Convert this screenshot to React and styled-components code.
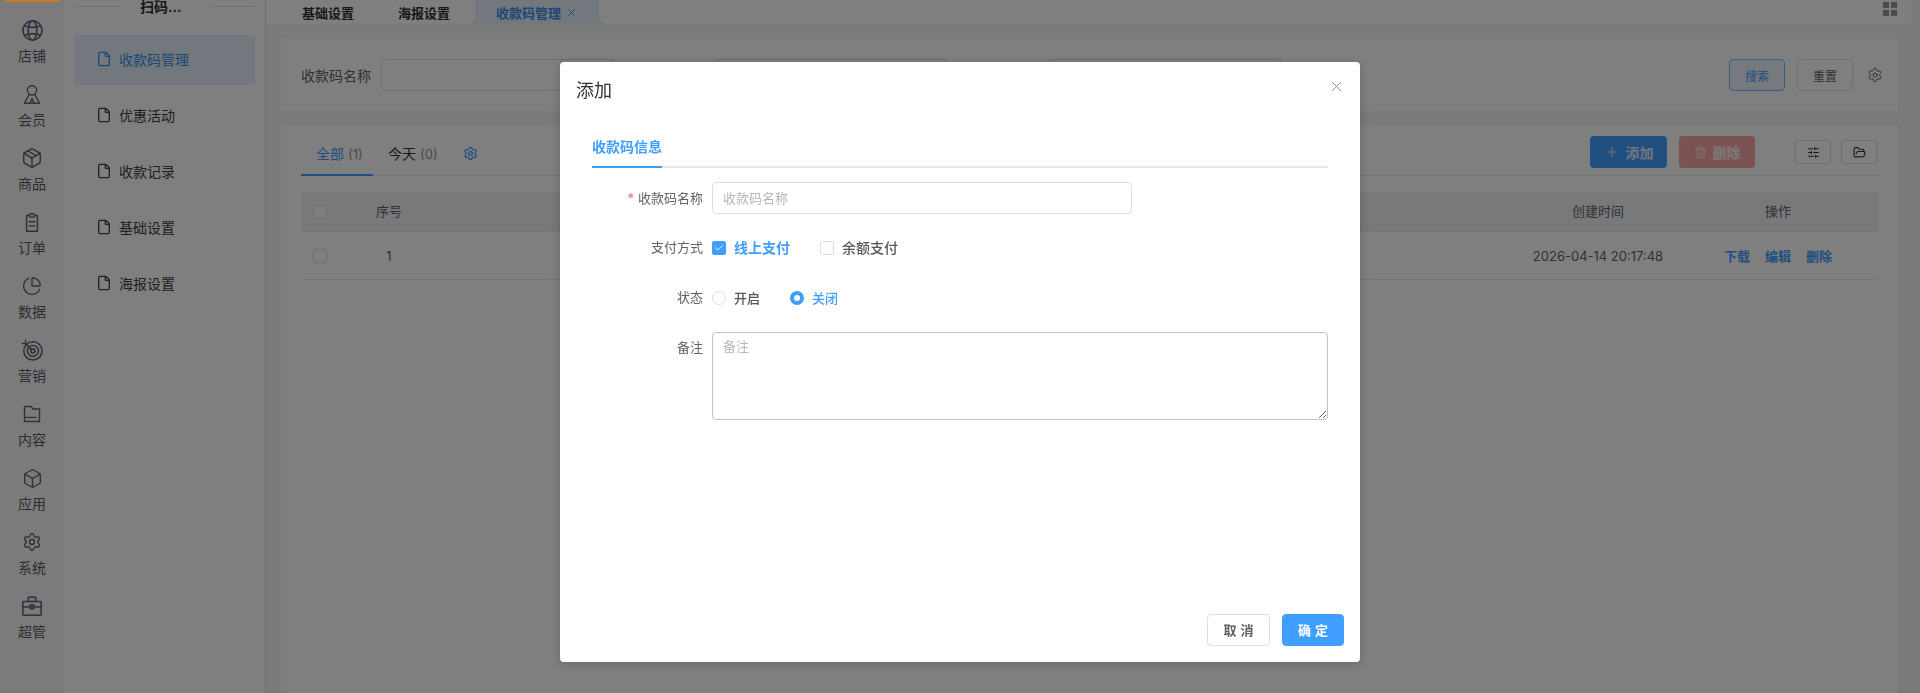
import React from 'react';
import styled, { createGlobalStyle } from 'styled-components';
import { Box, ChartPie, File, FolderOpen, Package, Plus, Settings, SlidersHorizontal, Trash2, X, Check } from 'lucide-react';

const GlobalStyle = createGlobalStyle`
  html, body {
    margin: 0;
    height: 100%;
    overflow: hidden;
    background: #f3f5f5;
    font-family: Inter, "Noto Sans CJK SC", sans-serif;
    font-size: 13px;
    color: #303133;
  }
  * { box-sizing: border-box; }
`;

const Shell = styled.div`
  display: flex;
  height: 693px;
`;
const Rail = styled.nav`
  position: relative;
  width: 64px;
  flex: none;
  background: #f6f7f8;
  display: flex;
  flex-direction: column;
  align-items: center;
  padding-top: 19px;
  gap: 18px;
  &::before {
    content: '';
    position: absolute;
    z-index: 2;
    top: 0;
    left: 5px;
    width: 55px;
    height: 2px;
    border-radius: 0 0 6px 6px;
    background: #c97a28;
  }
`;
const RailItem = styled.div`
  height: 46px;
  display: flex;
  flex-direction: column;
  align-items: center;
  justify-content: space-between;
  color: #5d6478;
  font-size: 14px;
  line-height: 18px;
  & > span { color: #555a66; }
`;
const RailGlyph = styled.div`
  height: 22px;
  display: flex;
  align-items: center;
  justify-content: center;
`;
const SubNav = styled.aside`
  width: 202px;
  flex: none;
  background: #fff;
  border-right: 1px solid #dcdfe6;
  padding: 0 10px;
`;
const SubTitle = styled.div`
  height: 35px;
  display: flex;
  align-items: flex-start;
  gap: 20px;
  font-size: 14px;
  font-weight: 600;
  line-height: 14px;
  color: #303133;
  &::before, &::after {
    content: '';
    height: 1px;
    margin-top: 6px;
    background: #dcdfe6;
  }
  &::before { width: 46px; }
  &::after { flex: 1; margin-left: 9px; }
`;
const SubItem = styled.div`
  height: 50px;
  margin-bottom: 6px;
  padding: 0 0 2px 22px;
  display: flex;
  align-items: center;
  gap: 7px;
  font-size: 14px;
  color: ${(p) => (p.$active ? '#3a8ee6' : '#404040')};
  background: ${(p) => (p.$active ? '#e6f0fc' : 'transparent')};
`;
const Main = styled.main`
  flex: 1;
  min-width: 0;
  display: flex;
  flex-direction: column;
`;
const TabBar = styled.div`
  height: 24px;
  margin-right: 9px;
  padding-left: 36px;
  flex: none;
  display: flex;
  background: #fff;
  position: relative;
  font-size: 13px;
  font-weight: 600;
`;
const PageTab = styled.div`
  height: 24px;
  display: flex;
  align-items: center;
  gap: 5px;
  margin-right: 46px;
  &:first-child { margin-right: 44px; }
`;
const ActiveTab = styled.div`
  position: relative;
  height: 24px;
  margin-left: -21px;
  padding: 0 12px 0 21px;
  width: 124px;
  display: flex;
  align-items: center;
  gap: 5px;
  color: #3a8ee6;
  background: #e6f0fc;
  &::before, &::after {
    content: '';
    position: absolute;
    bottom: 0;
    width: 8px;
    height: 8px;
  }
  &::before {
    left: -8px;
    background: radial-gradient(circle at 0 0, #fff 8px, #e6f0fc 8.5px);
  }
  &::after {
    right: -8px;
    background: radial-gradient(circle at 100% 0, #fff 8px, #e6f0fc 8.5px);
  }
`;
const GridIcon = styled.svg`
  position: absolute;
  top: 2px;
  right: 14px;
`;
const Content = styled.div`
  flex: 1;
  padding: 15px 22px 0 15px;
  display: flex;
  flex-direction: column;
  gap: 14px;
`;
const FilterCard = styled.section`
  height: 72px;
  background: #fff;
  display: flex;
  align-items: center;
  padding: 0 15px 0 21px;
  gap: 22px;
`;
const FilterField = styled.div`
  width: 312px;
  display: flex;
  align-items: center;
  justify-content: flex-end;
  color: #606266;
  font-size: 14px;
`;
const FilterLabel = styled.span`
  margin: 0 auto 0 -1px;
`;
const FilterInput = styled.div`
  width: 233px;
  height: 32px;
  border: 1px solid #dcdfe6;
  border-radius: 4px;
`;
const FilterActions = styled.div`
  margin-left: auto;
  display: flex;
  align-items: center;
  gap: 12px;
  & > svg { margin-left: 2px; color: #606266; }
`;
const PlainButton = styled.button`
  width: 56px;
  height: 32px;
  padding: 0;
  border-radius: 4px;
  font: inherit;
  font-size: 12px;
  color: ${(p) => (p.$primary ? '#409eff' : '#606266')};
  background: ${(p) => (p.$primary ? '#ecf5ff' : '#fff')};
  border: 1px solid ${(p) => (p.$primary ? '#79bbff' : '#dcdfe6')};
`;
const TableCard = styled.section`
  flex: 1;
  background: #fff;
  padding: 0 20px;
`;
const TableToolbar = styled.div`
  height: 51px;
  display: flex;
  align-items: flex-end;
  border-bottom: 1px solid #e4e7ed;
`;
const StatusTab = styled.div`
  width: ${(p) => p.$width}px;
  height: 51px;
  margin-bottom: -1px;
  padding: 11px 0 0 ${(p) => p.$inset}px;
  font-size: 14px;
  line-height: 36px;
  white-space: nowrap;
  color: ${(p) => (p.$active ? '#409eff' : '#303133')};
  border-bottom: 2px solid ${(p) => (p.$active ? '#409eff' : 'transparent')};
  & > small { font-size: 13px; color: #909399; margin-left: 4px; }
`;
const ToolbarGear = styled(Settings)`
  color: #409eff;
  margin: 0 0 14px 16px;
  align-self: flex-end;
`;
const ToolbarActions = styled.div`
  margin: 0 1px 0 auto;
  align-self: flex-start;
  padding-top: 11px;
  display: flex;
  align-items: center;
  gap: 12px;
`;
const SolidButton = styled.button`
  height: 32px;
  width: ${(p) => p.$width}px;
  padding: 0;
  border: 0;
  border-radius: 4px;
  font: inherit;
  font-size: 14px;
  font-weight: 700;
  display: flex;
  align-items: center;
  justify-content: center;
  gap: 6px;
  color: rgba(255, 255, 255, 0.85);
  background: ${(p) => p.$bg};
`;
const IconButton = styled.button`
  width: 36px;
  height: 24px;
  padding: 0;
  margin-left: ${(p) => p.$gap}px;
  border: 1px solid #dcdfe6;
  border-radius: 3px;
  background: #fff;
  color: #303133;
  display: flex;
  align-items: center;
  justify-content: center;
`;
const TableRow = styled.div`
  height: ${(p) => (p.$head ? 40 : 48)}px;
  margin-top: ${(p) => (p.$head ? 16 : 0)}px;
  display: grid;
  grid-template-columns: 50px 50px 1fr 160px 200px;
  align-items: center;
  background: ${(p) => (p.$head ? '#f0f2f6' : 'transparent')};
  border-bottom: 1px solid #e9ebef;
  color: #606266;
  text-align: center;
`;
const Tick = styled.span`
  width: 14px;
  height: 14px;
  margin-left: 12px;
  border: 1px solid #dcdfe6;
  border-radius: 2px;
  background: #fff;
`;
const HeadCell = styled.span`
  padding-bottom: 2px;
`;
const SerialCell = styled.span`
  margin-left: 25px;
  width: 26px;
  padding-bottom: ${(p) => (p.$head ? 2 : 0)}px;
`;
const Links = styled.div`
  display: flex;
  justify-content: center;
  gap: 15px;
  white-space: nowrap;
  color: #409eff;
  font-size: 13px;
  font-weight: 600;
`;

const Overlay = styled.div`
  position: fixed;
  z-index: 1;
  inset: 0;
  background: rgba(0, 0, 0, 0.5);
  display: flex;
  justify-content: center;
  padding-top: 62px;
`;
const Modal = styled.div`
  width: 800px;
  height: 600px;
  background: #fff;
  border-radius: 4px;
  box-shadow: 0 2px 12px rgba(0, 0, 0, 0.2);
  display: flex;
  flex-direction: column;
  color: #606266;
`;
const ModalHead = styled.header`
  height: 54px;
  padding: 0 16px;
  flex: none;
  display: flex;
  align-items: center;
  justify-content: space-between;
  font-size: 18px;
  color: #303133;
  & > svg { color: #7c7f85; margin: -6px -1px 0 0; }
`;
const ModalBody = styled.div`
  flex: 1;
  padding: 10px 32px 0;
  display: flex;
  flex-direction: column;
  gap: 18px;
`;
const SectionTabs = styled.div`
  height: 42px;
  margin-bottom: -4px;
  border-bottom: 2px solid #e4e7ed;
  display: flex;
`;
const SectionTab = styled.div`
  height: 42px;
  font-size: 14px;
  font-weight: 600;
  line-height: 42px;
  color: #409eff;
  border-bottom: 2px solid #409eff;
`;
const FormRow = styled.div`
  display: flex;
  align-items: ${(p) => (p.$top ? 'flex-start' : 'center')};
  min-height: 32px;
`;
const FormLabel = styled.label`
  width: 111px;
  margin-right: 9px;
  flex: none;
  text-align: right;
  font-size: 13px;
  line-height: ${(p) => (p.$tight ? 30 : 32)}px;
  height: 32px;
  & > i { color: #f56c6c; font-style: normal; margin-right: 4px; }
`;
const TextField = styled.input`
  width: 420px;
  height: 32px;
  padding: 0 10px;
  border: 1px solid #dcdfe6;
  border-radius: 4px;
  font: inherit;
  font-size: 13px;
  outline: none;
  &::placeholder { color: #b4b7bd; }
`;
const TextArea = styled.textarea`
  flex: 1;
  height: 88px;
  padding: 3px 10px;
  border: 1px solid #c0c4cc;
  border-radius: 4px;
  font: inherit;
  font-size: 13px;
  outline: none;
  &::placeholder { color: #b4b7bd; }
`;
const Option = styled.span`
  display: inline-flex;
  align-items: center;
  padding-bottom: 2px;
  gap: ${(p) => p.$gap}px;
  width: ${(p) => p.$width}px;
  font-size: ${(p) => p.$size}px;
  font-weight: ${(p) => (p.$strong ? 600 : 500)};
  color: ${(p) => (p.$on ? '#409eff' : '#555')};
`;
const CheckMark = styled.span`
  width: 14px;
  height: 14px;
  margin-top: 2px;
  flex: none;
  border-radius: 2px;
  border: 1px solid ${(p) => (p.$on ? '#409eff' : '#dcdfe6')};
  background: ${(p) => (p.$on ? '#409eff' : '#fff')};
  color: #fff;
  display: flex;
  align-items: center;
  justify-content: center;
`;
const RadioMark = styled.span`
  width: 14px;
  height: 14px;
  margin-top: 2px;
  flex: none;
  border-radius: 50%;
  border: ${(p) => (p.$on ? '4px solid #409eff' : '1px solid #dcdfe6')};
  background: #fff;
`;
const ModalFoot = styled.footer`
  padding: 0 16px 16px;
  display: flex;
  justify-content: flex-end;
  gap: 12px;
`;
const FootButton = styled.button`
  width: ${(p) => p.$width}px;
  height: 32px;
  padding: 0 0 2px 4px;
  border-radius: 4px;
  font: inherit;
  font-size: 13px;
  font-weight: 700;
  letter-spacing: 4px;
  color: ${(p) => (p.$primary ? '#fff' : '#606266')};
  background: ${(p) => (p.$primary ? '#409eff' : '#fff')};
  border: 1px solid ${(p) => (p.$primary ? '#409eff' : '#dcdfe6')};
`;

const icon = { viewBox: '0 0 24 24', fill: 'none', stroke: 'currentColor', strokeWidth: 1.7, strokeLinecap: 'round', strokeLinejoin: 'round' };

const GlobeIcon = () => (
  <svg {...icon} width="23" height="23">
    <circle cx="12" cy="12" r="10" />
    <ellipse cx="12" cy="12" rx="4.5" ry="10" />
    <path d="M3.6 7q8.4 3.5 16.8 0M3.6 17q8.4-3.5 16.8 0" />
  </svg>
);
const MemberIcon = () => (
  <svg {...icon} width="20" height="21">
    <circle cx="12" cy="7" r="5.5" />
    <path d="M8.5 12 3 22.5h18L15.5 12M12 17l-2.5 5.5h5z" />
  </svg>
);
const OrderIcon = () => (
  <svg {...icon} width="20" height="21">
    <path d="M9 3.5H5.5v19h13v-19H15" />
    <rect x="9" y="1.5" width="6" height="4" rx="1" />
    <path d="M8.5 11h7M8.5 16h7" />
  </svg>
);
const TargetIcon = () => (
  <svg {...icon} width="22" height="22">
    <circle cx="13" cy="13" r="10" />
    <circle cx="13" cy="13" r="6" />
    <circle cx="13" cy="13" r="2.2" />
    <path d="M12 12 5 5M5 1.5V5H1.5" />
  </svg>
);
const FolderIcon = () => (
  <svg {...icon} width="20" height="20">
    <path d="M3 3h8l2 3h8v15H3z" />
    <path d="M3 16h14" />
  </svg>
);
const CaseIcon = () => (
  <svg {...icon} width="22" height="22">
    <rect x="2" y="7" width="20" height="15" rx="1" />
    <path d="M8 7V2.5h8V7M2 13h20" />
    <rect x="10" y="11" width="4" height="4" />
  </svg>
);

const railItems = [
  ['店铺', <GlobeIcon />],
  ['会员', <MemberIcon />],
  ['商品', <Package size={22} strokeWidth={1.6} />],
  ['订单', <OrderIcon />],
  ['数据', <ChartPie size={20} strokeWidth={1.7} />],
  ['营销', <TargetIcon />],
  ['内容', <FolderIcon />],
  ['应用', <Box size={21} strokeWidth={1.6} />],
  ['系统', <Settings size={20} strokeWidth={1.7} />],
  ['超管', <CaseIcon />],
];
const subItems = ['收款码管理', '优惠活动', '收款记录', '基础设置', '海报设置'];

export default function App() {
  return (
    <>
      <GlobalStyle />
      <Shell>
        <Rail>
          {railItems.map(([label, glyph]) => (
            <RailItem key={label}>
              <RailGlyph>{glyph}</RailGlyph>
              <span>{label}</span>
            </RailItem>
          ))}
        </Rail>
        <SubNav>
          <SubTitle>扫码...</SubTitle>
          {subItems.map((s, i) => (
            <SubItem key={s} $active={i === 0}>
              <File size={16} />
              {s}
            </SubItem>
          ))}
        </SubNav>
        <Main>
          <TabBar>
            <PageTab>基础设置</PageTab>
            <PageTab>海报设置</PageTab>
            <ActiveTab>
              收款码管理 <X size={11} />
            </ActiveTab>
            <GridIcon width="14" height="14" viewBox="0 0 14 14" fill="#999">
              <rect width="6" height="6" />
              <rect x="8" width="6" height="6" />
              <rect y="8" width="6" height="6" />
              <rect x="8" y="8" width="6" height="6" />
            </GridIcon>
          </TabBar>
          <Content>
            <FilterCard>
              <FilterField>
                <FilterLabel>收款码名称</FilterLabel>
                <FilterInput />
              </FilterField>
              <FilterField>
                <FilterInput />
              </FilterField>
              <FilterField>
                <FilterInput />
              </FilterField>
              <FilterActions>
                <PlainButton $primary>搜索</PlainButton>
                <PlainButton>重置</PlainButton>
                <Settings size={16} strokeWidth={1.5} />
              </FilterActions>
            </FilterCard>
            <TableCard>
              <TableToolbar>
                <StatusTab $active $width={72} $inset={15}>
                  全部<small>(1)</small>
                </StatusTab>
                <StatusTab $width={74} $inset={15}>
                  今天<small>(0)</small>
                </StatusTab>
                <ToolbarGear size={15} />
                <ToolbarActions>
                  <SolidButton $width={77} $bg="#409eff">
                    <Plus size={16} strokeWidth={1.5} />
                    添加
                  </SolidButton>
                  <SolidButton $width={76} $bg="#f9a7a7">
                    <Trash2 size={13} strokeWidth={1.5} />
                    删除
                  </SolidButton>
                  <IconButton $gap={28}>
                    <SlidersHorizontal size={13} />
                  </IconButton>
                  <IconButton $gap={-2}>
                    <FolderOpen size={13} />
                  </IconButton>
                </ToolbarActions>
              </TableToolbar>
              <TableRow $head>
                <Tick />
                <SerialCell $head>序号</SerialCell>
                <span />
                <HeadCell>创建时间</HeadCell>
                <HeadCell>操作</HeadCell>
              </TableRow>
              <TableRow>
                <Tick />
                <SerialCell>1</SerialCell>
                <span />
                <span>2026-04-14 20:17:48</span>
                <Links>
                  <span>下载</span>
                  <span>编辑</span>
                  <span>删除</span>
                </Links>
              </TableRow>
            </TableCard>
          </Content>
        </Main>
      </Shell>
      <Overlay>
        <Modal>
          <ModalHead>
            添加
            <X size={17} strokeWidth={1.2} />
          </ModalHead>
          <ModalBody>
            <SectionTabs>
              <SectionTab>收款码信息</SectionTab>
            </SectionTabs>
            <FormRow>
              <FormLabel>
                <i>*</i>收款码名称
              </FormLabel>
              <TextField placeholder="收款码名称" readOnly />
            </FormRow>
            <FormRow>
              <FormLabel $tight>支付方式</FormLabel>
              <Option $on $strong $gap={8} $width={108} $size={14}>
                <CheckMark $on>
                  <Check size={10} strokeWidth={2} />
                </CheckMark>
                线上支付
              </Option>
              <Option $gap={8} $width={90} $size={14}>
                <CheckMark />
                余额支付
              </Option>
            </FormRow>
            <FormRow>
              <FormLabel $tight>状态</FormLabel>
              <Option $gap={8} $width={78} $size={13}>
                <RadioMark />
                开启
              </Option>
              <Option $on $gap={8} $width={70} $size={13}>
                <RadioMark $on />
                关闭
              </Option>
            </FormRow>
            <FormRow $top>
              <FormLabel $tight>备注</FormLabel>
              <TextArea placeholder="备注" readOnly />
            </FormRow>
          </ModalBody>
          <ModalFoot>
            <FootButton $width={63}>取消</FootButton>
            <FootButton $primary $width={62}>
              确定
            </FootButton>
          </ModalFoot>
        </Modal>
      </Overlay>
    </>
  );
}
